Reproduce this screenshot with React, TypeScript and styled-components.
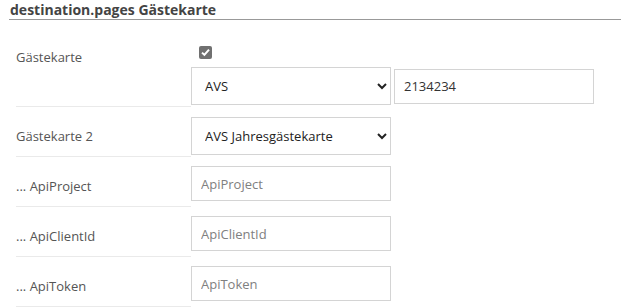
import styled, { createGlobalStyle } from 'styled-components';

const GlobalStyle = createGlobalStyle`
  body {
    margin: 0;
    background: #fff;
    font-family: "Open Sans", "Liberation Sans", sans-serif;
  }
`;

const Page = styled.div`
  width: 622px;
`;

const SectionTitle = styled.h3`
  margin: 0 1px 0 9px;
  padding: 1px 0 0 1px;
  height: 18px;
  line-height: 18px;
  font-size: 14px;
  font-weight: 700;
  color: #444;
  border-bottom: 1px solid #999;
`;

const Form = styled.div`
  padding: 8px 0 0 16px;
`;

const Row = styled.div`
  display: grid;
  grid-template-columns: 175px 1fr;
`;

const Label = styled.div`
  padding-top: 19px;
  font-size: 13px;
  line-height: 20px;
  color: #555;
  border-bottom: 1px solid #eaeaea;
`;

const Controls = styled.div<{ $top: number }>`
  display: flex;
  flex-direction: column;
  padding: ${({ $top }) => $top}px 0 2px;
  min-height: 50px;
  box-sizing: border-box;
`;

const Line = styled.div`
  display: flex;
  align-items: center;
  gap: 3px;
`;

const CheckLine = styled.div`
  display: flex;
  height: 13px;
  margin: 0 0 8px 8px;
`;

const Checkbox = styled.span`
  display: flex;
  width: 13px;
  height: 13px;
  border-radius: 2px;
  background: #707070;
`;

const Select = styled.select`
  width: 200px;
  height: 38px;
  padding: 0 6px 0 9px;
  border: 1px solid #d4d4d4;
  border-radius: 0;
  background: #fff;
  font-family: inherit;
  font-size: 13px;
  color: #222;
  outline: none;
`;

const Input = styled.input`
  width: 200px;
  height: 35px;
  box-sizing: border-box;
  padding: 0 9px;
  border: 1px solid #d4d4d4;
  border-radius: 0;
  font-family: inherit;
  font-size: 13px;
  color: #333;
  outline: none;

  &::placeholder {
    color: #808080;
  }
`;

const fields = ['ApiProject', 'ApiClientId', 'ApiToken'];

const App = () => {
  return (
    <Page>
      <GlobalStyle />
      <SectionTitle>destination.pages Gästekarte</SectionTitle>
      <Form>
        <Row>
          <Label>Gästekarte</Label>
          <Controls $top={18}>
            <CheckLine>
              <Checkbox>
                <svg width="13" height="13" viewBox="0 0 13 13">
                  <path d="M3 6.6 L5.4 8.9 L10 3.6" fill="none" stroke="#fff" strokeWidth="2" />
                </svg>
              </Checkbox>
            </CheckLine>
            <Line>
              <Select defaultValue="AVS">
                <option>AVS</option>
              </Select>
              <Input defaultValue="2134234" />
            </Line>
          </Controls>
        </Row>
        <Row>
          <Label>Gästekarte 2</Label>
          <Controls $top={10}>
            <Select defaultValue="AVS Jahresgästekarte">
              <option>AVS Jahresgästekarte</option>
            </Select>
          </Controls>
        </Row>
        {fields.map((f) => (
          <Row key={f}>
            <Label>... {f}</Label>
            <Controls $top={9}>
              <Input placeholder={f} />
            </Controls>
          </Row>
        ))}
      </Form>
    </Page>
  );
};

export default App;
